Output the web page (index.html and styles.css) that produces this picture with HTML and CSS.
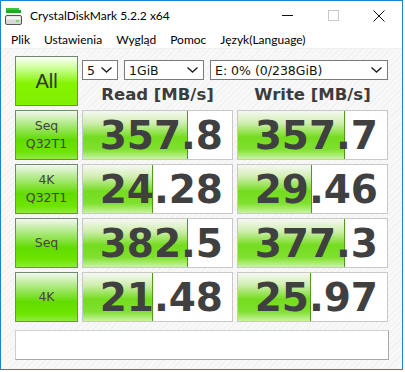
FILE: index.html
```html
<!DOCTYPE html>
<html lang="pl">
  <head>
    <meta charset="UTF-8" />
    <title>CrystalDiskMark 5.2.2 x64</title>
    <link rel="stylesheet" href="styles.css">
  </head>
  <body>
    <div class="window">
      <div class="titlebar">
        <svg class="app-icon" width="18" height="18" viewBox="0 0 18 18">
          <rect x="1" y="1" width="13" height="2" fill="#3cc83c" />
          <rect x="1" y="3" width="15" height="3" fill="#22a822" />
          <rect x="0.5" y="8.5" width="16" height="9" rx="1.5" fill="#d8d8d8" stroke="#555" />
          <rect x="1.5" y="9.5" width="14" height="3" fill="#f4f4f4" />
          <rect x="11" y="13" width="3" height="2" fill="#7cd87c" />
        </svg>
        <span class="title">CrystalDiskMark 5.2.2 x64</span>
        <div class="controls">
          <span class="ctl"><svg width="11" height="11" viewBox="0 0 11 11"><line x1="0" y1="5.5" x2="11" y2="5.5" stroke="#111" /></svg></span>
          <span class="ctl"><svg width="11" height="11" viewBox="0 0 11 11"><rect x="0.5" y="0.5" width="10" height="10" fill="none" stroke="#c8c8c8" /></svg></span>
          <span class="ctl"><svg width="12" height="12" viewBox="0 0 12 12"><path d="M0.5 0.5 L11.5 11.5 M11.5 0.5 L0.5 11.5" stroke="#111" /></svg></span>
        </div>
      </div>
      <div class="menubar">
        <span>Plik</span>
        <span>Ustawienia</span>
        <span>Wygląd</span>
        <span>Pomoc</span>
        <span>Język(Language)</span>
      </div>
      <div class="client">
        <div class="board">
          <div class="btn btn-all">All</div>
          <div class="head">
            <div class="selects">
              <div class="select sel-count">5<svg width="11" height="6" viewBox="0 0 11 6"><path d="M0.5 0.5 L5.5 5 L10.5 0.5" fill="none" stroke="#222" stroke-width="1.4" /></svg></div>
              <div class="select sel-size">1GiB<svg width="11" height="6" viewBox="0 0 11 6"><path d="M0.5 0.5 L5.5 5 L10.5 0.5" fill="none" stroke="#222" stroke-width="1.4" /></svg></div>
              <div class="select sel-drive">E: 0% (0/238GiB)<svg width="11" height="6" viewBox="0 0 11 6"><path d="M0.5 0.5 L5.5 5 L10.5 0.5" fill="none" stroke="#222" stroke-width="1.4" /></svg></div>
            </div>
            <div class="col-titles">
              <span>Read [MB/s]</span>
              <span>Write [MB/s]</span>
            </div>
          </div>

          <div class="btn">Seq<br>Q32T1</div>
          <div class="cell"><div class="bar" style="width: 70%"></div><span class="val">357.8</span></div>
          <div class="cell"><div class="bar" style="width: 71%"></div><span class="val">357.7</span></div>

          <div class="btn">4K<br>Q32T1</div>
          <div class="cell"><div class="bar" style="width: 46%"></div><span class="val">24.28</span></div>
          <div class="cell"><div class="bar" style="width: 49%"></div><span class="val">29.46</span></div>

          <div class="btn">Seq</div>
          <div class="cell"><div class="bar" style="width: 70%"></div><span class="val">382.5</span></div>
          <div class="cell"><div class="bar" style="width: 71%"></div><span class="val">377.3</span></div>

          <div class="btn">4K</div>
          <div class="cell"><div class="bar" style="width: 46%"></div><span class="val">21.48</span></div>
          <div class="cell"><div class="bar" style="width: 48%"></div><span class="val">25.97</span></div>
        </div>
        <div class="comment"></div>
      </div>
    </div>
  </body>
</html>
```

FILE: styles.css
```css
body {
  margin: 0;
  background: #fff;
  font-family: Lato, sans-serif;
}
.window {
  width: 401px;
  height: 368px;
  border: 1px solid #1883d7;
  display: flex;
  flex-direction: column;
  background: #fff;
}
.titlebar {
  height: 29px;
  display: flex;
  align-items: center;
  padding-left: 4px;
}
.app-icon {
  margin-right: 7px;
  margin-top: 1px;
}
.title {
  font-size: 12px;
  color: #000;
}
.controls {
  margin-left: auto;
  display: flex;
  height: 100%;
}
.ctl {
  width: 46px;
  display: flex;
  align-items: center;
  justify-content: center;
}
.menubar {
  height: 18px;
  display: flex;
  align-items: center;
  gap: 14px;
  padding-left: 10px;
  font-size: 12px;
  color: #000;
  border-bottom: 1px solid #f0f0f0;
}
.client {
  flex: 1;
  padding: 7px 13px 0 14px;
  background: repeating-linear-gradient(135deg, #f8f8f8 0, #f8f8f8 3px, #f1f1f1 3px, #f1f1f1 4px);
}
.board {
  display: grid;
  grid-template-columns: 63px 151px 151px;
  grid-auto-rows: 50px;
  column-gap: 4px;
  row-gap: 4px;
}
.btn {
  box-sizing: border-box;
  border: 1px solid #708a70;
  background: linear-gradient(#f2f8ee 0%, #a8e878 30%, #62dc00 60%, #6ee400 85%, #8cec40 100%);
  display: flex;
  align-items: center;
  justify-content: center;
  text-align: center;
  font-family: "DejaVu Sans", sans-serif;
  font-size: 12.5px;
  line-height: 18px;
  color: #444;
}
.btn-all {
  background: linear-gradient(#fbfff8 0%, #c8ff90 25%, #84f400 55%, #80f000 100%);
  font-family: "Liberation Sans", sans-serif;
  font-size: 20px;
  color: #333;
}
.head {
  grid-column: 2 / 4;
  display: flex;
  flex-direction: column;
}
.selects {
  display: flex;
  margin-top: 4px;
  gap: 6px;
}
.select {
  box-sizing: border-box;
  height: 20px;
  border: 1px solid #7a7a7a;
  background: #fff;
  display: flex;
  align-items: center;
  justify-content: space-between;
  padding: 0 5px 0 4px;
  font-family: "DejaVu Sans", sans-serif;
  font-size: 12.5px;
  color: #111;
}
.sel-count {
  width: 36px;
}
.sel-size {
  width: 80px;
}
.sel-drive {
  flex: 1;
}
.col-titles {
  display: flex;
  gap: 4px;
  margin-top: 5px;
}
.col-titles span {
  width: 151px;
  text-align: center;
  font-family: "DejaVu Sans", sans-serif;
  font-weight: bold;
  font-size: 16.5px;
  color: #3c3c3c;
}
.cell {
  position: relative;
  box-sizing: border-box;
  border: 1px solid #c8c8c8;
  background: #fff;
  display: flex;
  align-items: center;
  justify-content: flex-end;
  padding-right: 9px;
}
.bar {
  position: absolute;
  left: 0;
  top: 0;
  bottom: 0;
  border-right: 1px solid #4a9a1c;
  background: linear-gradient(#f6f8f4 0%, #d0eeb0 25%, #74dc1e 55%, #80e030 80%, #c8f4a0 100%);
}
.val {
  position: relative;
  font-family: "DejaVu Sans", sans-serif;
  font-weight: bold;
  font-size: 39px;
  color: #404040;
  line-height: 1;
}
.comment {
  box-sizing: border-box;
  height: 30px;
  margin-top: 8px;
  width: 374px;
  border: 1px solid #a8a8a8;
  border-left-color: #d0d0d0;
  border-top-color: #d0d0d0;
  background: #fff;
}
```
